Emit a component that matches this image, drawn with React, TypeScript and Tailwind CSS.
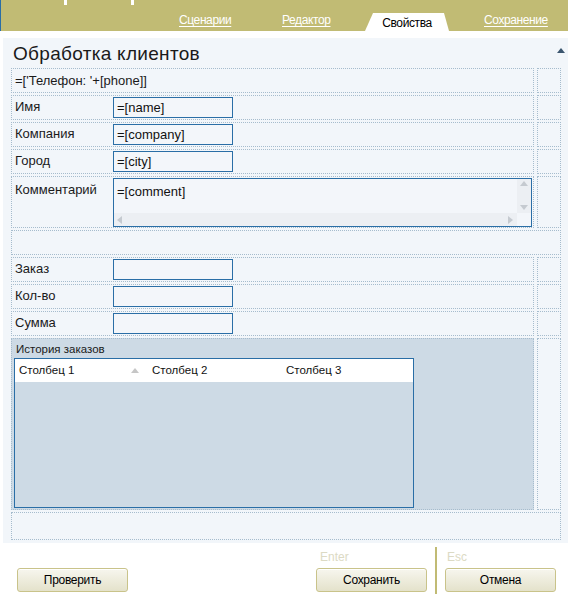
import React from "react";

const dot = "border border-dotted border-[#a6bccd]";

function Btn({ children }: { children: React.ReactNode }) {
  return (
    <div className="flex h-[24px] w-[111px] items-center justify-center rounded-[3px] border border-[#c9c38a] bg-linear-to-b from-[#f7f6ee] to-[#e4e2cb] text-[12px] tracking-[-0.3px] text-black shadow-[inset_0_1px_0_#ffffff]">
      {children}
    </div>
  );
}

function Input({ value }: { value?: string }) {
  return (
    <div className="flex h-[21px] w-[120px] items-center border border-[#2a6ea6] bg-[#f3f6fa] pl-[3px] text-[13px] text-[#111]">
      {value}
    </div>
  );
}

function RightCell({ className = "" }: { className?: string }) {
  return <div className={`w-[24px] shrink-0 ${dot} ${className}`} />;
}

function LabelRow({ label, value }: { label: string; value?: string }) {
  return (
    <div className="flex h-[25px] gap-[3px]">
      <div className={`flex flex-1 items-center ${dot}`}>
        <div className="w-[101px] pb-[1px] pl-[3px] text-[13px] text-[#1a1a1a]">{label}</div>
        <Input value={value} />
      </div>
      <RightCell />
    </div>
  );
}

function Tri({ dir, className }: { dir: "up" | "down" | "left" | "right"; className?: string }) {
  const pts =
    dir === "up" ? "0,6 4,1 8,6" : dir === "down" ? "0,1 4,6 8,1" : dir === "left" ? "6,0 1,4 6,8" : "1,0 6,4 1,8";
  return (
    <svg width="8" height="8" viewBox="0 0 8 8" className={className}>
      <polygon points={pts} fill="currentColor" />
    </svg>
  );
}

export default function App() {
  return (
    <div className="flex h-[604px] w-[568px] flex-col bg-white font-['Liberation_Sans',Arial,sans-serif]">
      {/* header */}
      <div className="flex h-[31px] shrink-0 items-end border-l border-[#2a6ea6] bg-[#c1bb74]">
        <svg width="139" height="31" viewBox="0 0 139 31" className="shrink-0 self-start">
          <rect x="63" y="0" width="3" height="5" fill="#ffffff" />
          <rect x="130" y="0" width="3" height="5" fill="#ffffff" />
        </svg>
        <div className="ml-[39px] flex h-[18px] items-end">
          <div className="w-[103px] pb-[2px] text-[12px] tracking-[-0.4px] text-white underline underline-offset-[2px]">Сценарии</div>
          <div className="w-[83px] pb-[2px] text-[12px] tracking-[-0.4px] text-white underline underline-offset-[2px]">Редактор</div>
          <div className="flex h-[18px] w-[84px] items-center justify-center bg-white pt-[1px] text-[12px] tracking-[-0.4px] text-black [clip-path:polygon(8px_0,calc(100%-5px)_0,100%_100%,0_100%)]">
            Свойства
          </div>
          <div className="ml-[35px] pb-[2px] text-[12px] tracking-[-0.4px] text-white underline underline-offset-[2px]">Сохранение</div>
        </div>
      </div>

      {/* panel */}
      <div className="mt-[7px] ml-[3px] flex flex-col bg-[#f2f6fa] pr-[7px] pb-[3px] pl-[8px]">
        <div className="flex h-[30px] items-center justify-between pl-[2px]">
          <span className="text-[19px] leading-none tracking-[0.3px] text-[#1a1a1a]">Обработка клиентов</span>
          <Tri dir="up" className="-mr-[4px] mb-[4px] text-[#3c566f]" />
        </div>

        <div className="flex flex-col gap-[2px]">
          <div className="flex h-[25px] gap-[3px]">
            <div className={`flex flex-1 items-center pl-[3px] text-[13px] text-[#1a1a1a] ${dot}`}>
              =['Телефон: '+[phone]]
            </div>
            <RightCell />
          </div>
          <LabelRow label="Имя" value="=[name]" />
          <LabelRow label="Компания" value="=[company]" />
          <LabelRow label="Город" value="=[city]" />

          {/* comment */}
          <div className="flex h-[52px] gap-[3px]">
            <div className={`flex flex-1 items-start pt-[1px] pr-[1px] ${dot}`}>
              <div className="w-[101px] pt-[2px] pl-[3px] text-[13px] text-[#1a1a1a]">Комментарий</div>
              <div className="flex h-[49px] flex-1 flex-col border border-[#2a6ea6] bg-[#f3f6fa]">
                <div className="flex flex-1">
                  <div className="flex-1 pt-[3px] pl-[3px] text-[13px] text-[#111]">=[comment]</div>
                  <div className="flex w-[14px] flex-col items-center justify-between bg-[#eceff3] py-[1px]">
                    <Tri dir="up" className="text-[#c5cad0]" />
                    <Tri dir="down" className="text-[#c5cad0]" />
                  </div>
                </div>
                <div className="flex h-[13px]">
                  <div className="flex flex-1 items-center justify-between bg-[#eceff3] px-[2px]">
                    <Tri dir="left" className="text-[#c5cad0]" />
                    <Tri dir="right" className="text-[#c5cad0]" />
                  </div>
                  <div className="w-[14px]" />
                </div>
              </div>
            </div>
            <RightCell />
          </div>

          <div className={`h-[25px] ${dot}`} />

          <LabelRow label="Заказ" />
          <LabelRow label="Кол-во" />
          <LabelRow label="Сумма" />

          {/* history group */}
          <div className="flex h-[172px] gap-[3px]">
            <div className={`flex flex-1 flex-col bg-[#cddae5] ${dot}`}>
              <div className="h-[19px] pt-[2px] pl-[4px] text-[11.5px] text-[#1a1a1a]">История заказов</div>
              <div className="ml-[2px] flex h-[150px] w-[400px] flex-col border border-[#2a6ea6] bg-[#cddae5]">
                <div className="flex h-[23px] items-center bg-white text-[11.5px] text-[#111]">
                  <div className="flex w-[137px] items-center justify-between pl-[4px] pr-[13px]">
                    <span>Столбец 1</span>
                    <Tri dir="up" className="text-[#c6c6c6]" />
                  </div>
                  <div className="w-[134px]">Столбец 2</div>
                  <div>Столбец 3</div>
                </div>
              </div>
            </div>
            <RightCell />
          </div>

          <div className={`h-[28px] ${dot}`} />
        </div>
      </div>

      {/* bottom */}
      <div className="flex flex-1">
        <div className="pt-[25px] pl-[17px]">
          <Btn>Проверить</Btn>
        </div>
        <div className="ml-auto flex pt-[4px] pr-[12px]">
          <div className="flex w-[111px] flex-col">
            <div className="h-[21px] pl-[4px] pt-[1px] text-[12px] text-[#dcdac4]">Enter</div>
            <Btn>Сохранить</Btn>
          </div>
          <div className="mx-[8px] h-[47px] w-[2px] bg-[#c1bb74]" />
          <div className="flex w-[111px] flex-col">
            <div className="h-[21px] pl-[2px] pt-[1px] text-[12px] text-[#dcdac4]">Esc</div>
            <Btn>Отмена</Btn>
          </div>
        </div>
      </div>
    </div>
  );
}
